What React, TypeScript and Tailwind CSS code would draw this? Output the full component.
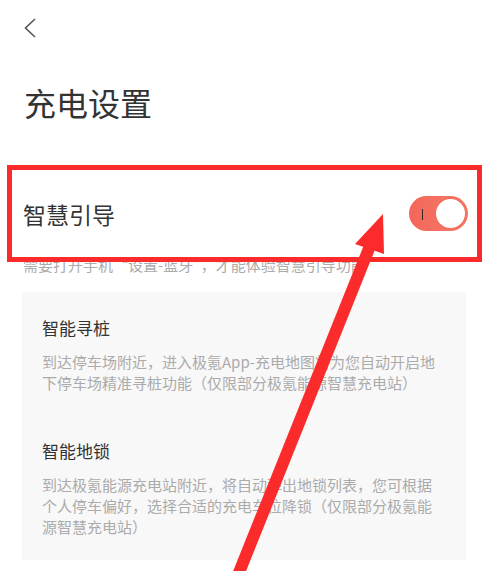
import React from 'react'

const FONT = { fontFamily: '"Noto Sans CJK SC", "Noto Sans", sans-serif' }

function BackIcon() {
  return (
    <svg width="12" height="20" viewBox="0 0 12 20" fill="none">
      <path d="M11 1 L1.5 10 L11 19" stroke="#555" strokeWidth="1.6" strokeLinejoin="miter" />
    </svg>
  )
}

function Toggle({ on }: { on: boolean }) {
  return (
    <div className="relative w-[59px] h-[35px] rounded-full bg-gradient-to-r from-[#f4665a] to-[#f37c6a]">
      {on && <span className="absolute left-[13px] top-[13px] w-px h-[11px] bg-[#3a2a2a]" />}
      <span className="absolute right-[1px] top-[1px] w-[33px] h-[33px] rounded-full bg-white border-2 border-[#f3705f]" />
    </div>
  )
}

const features = [
  {
    title: '智能寻桩',
    desc: '到达停车场附近，进入极氪App-充电地图将为您自动开启地下停车场精准寻桩功能（仅限部分极氪能源智慧充电站）',
  },
  {
    title: '智能地锁',
    desc: '到达极氪能源充电站附近，将自动弹出地锁列表，您可根据个人停车偏好，选择合适的充电车位降锁（仅限部分极氪能源智慧充电站）',
  },
]

export default function App() {
  return (
    <div className="relative w-full h-[571px] overflow-hidden bg-white" style={FONT}>
      <div className="pt-[18px] pl-[24px]">
        <BackIcon />
      </div>

      <h1 className="mt-[44px] pl-[24px] text-[32px] leading-[40px] font-normal text-[#333]">充电设置</h1>

      <div className="mt-[74px] pl-[23px] pr-[24px] flex items-center justify-between">
        <span className="text-[23px] leading-[30px] text-[#333]">智慧引导</span>
        <Toggle on />
      </div>

      <p className="mt-[23px] pl-[23px] text-[15px] leading-[21px] text-[#ababab] whitespace-nowrap">
        需要打开手机“设置-蓝牙”，才能体验智慧引导功能
      </p>

      <div className="mt-[17px] ml-[22px] w-[444px] bg-[#f8f8f9] px-[20px] pt-[24px] pb-[23px]">
        {features.map((f, i) => (
          <div key={f.title} className={i > 0 ? 'mt-[46px]' : ''}>
            <div className="text-[17px] leading-[24px] text-[#333]">{f.title}</div>
            <p className="mt-[11px] text-[15px] leading-[21px] text-[#ababab]">{f.desc}</p>
          </div>
        ))}
      </div>

      {/* annotation overlay: red box + arrow */}
      <div className="absolute left-[7px] top-[165px] w-[475px] h-[97px] border-[5px] border-[#fb2b2b] pointer-events-none" />
      <svg className="absolute inset-0 pointer-events-none" width="492" height="571" viewBox="0 0 492 571">
        <line x1="370" y1="246" x2="228" y2="600" stroke="#fb2b2b" strokeWidth="12" />
        <polygon points="383,214 355,244 384,254" fill="#fb2b2b" />
      </svg>
    </div>
  )
}
